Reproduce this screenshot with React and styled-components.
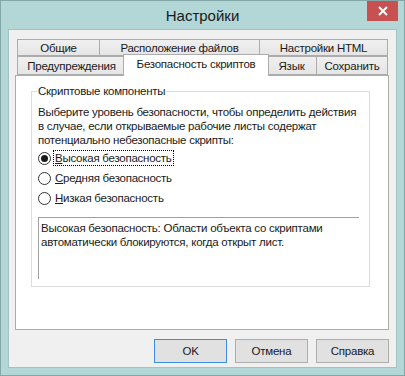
import React, { useState } from 'react';
import styled, { createGlobalStyle } from 'styled-components';

const GlobalStyle = createGlobalStyle`
  html, body {
    margin: 0;
    padding: 0;
    background: #b3d6d7;
  }
  * {
    box-sizing: border-box;
  }
`;

const topTabs = ['Общие', 'Расположение файлов', 'Настройки HTML'];
const bottomTabs = ['Предупреждения', 'Безопасность скриптов', 'Язык', 'Сохранить'];
const topWidths = [82, 160, 129];
const bottomWidths = [108, 142, 49, 72];

const levels = [
  { key: 'В', rest: 'ысокая безопасность' },
  { key: 'С', rest: 'редняя безопасность' },
  { key: 'Н', rest: 'изкая безопасность' },
];

const App = () => {
  const [level, setLevel] = useState(0);

  return (
    <>
      <GlobalStyle />
      <Window>
        <TitleBar>
          <Title>Настройки</Title>
          <CloseButton>
            <svg width="10" height="10" viewBox="0 0 10 10">
              <path d="M1 1 L9 9 M9 1 L1 9" stroke="#fff" strokeWidth="2" />
            </svg>
          </CloseButton>
        </TitleBar>
        <Client>
          <TabRow>
            {topTabs.map((t, i) => (
              <Tab key={t} style={{ width: topWidths[i] }}>{t}</Tab>
            ))}
          </TabRow>
          <TabRow>
            {bottomTabs.map((t, i) => (
              i === 1
                ? <ActiveTab key={t} style={{ width: bottomWidths[i] + 4 }}>{t}</ActiveTab>
                : <Tab key={t} style={{ width: bottomWidths[i] }}>{t}</Tab>
            ))}
          </TabRow>
          <Panel>
            <Group>
              <Legend>Скриптовые компоненты</Legend>
              <Description>
                Выберите уровень безопасности, чтобы определить действия<br />
                в случае, если открываемые рабочие листы содержат<br />
                потенциально небезопасные скрипты:
              </Description>
              <RadioList>
                {levels.map((l, i) => (
                  <RadioRow key={l.key} onClick={() => setLevel(i)}>
                    <RadioCircle $checked={level === i} />
                    <RadioLabel $focused={level === i}>
                      <u>{l.key}</u>{l.rest}
                    </RadioLabel>
                  </RadioRow>
                ))}
              </RadioList>
              <InfoBox>
                Высокая безопасность: Области объекта со скриптами<br />
                автоматически блокируются, когда открыт лист.
              </InfoBox>
            </Group>
          </Panel>
          <ButtonRow>
            <Button $default>OK</Button>
            <Button>Отмена</Button>
            <Button>Справка</Button>
          </ButtonRow>
        </Client>
      </Window>
    </>
  );
};

const Window = styled.div`
  width: 405px;
  height: 376px;
  border: 1px solid #83a6a7;
  background: #b3d6d7;
  padding: 0 7px 7px 7px;
  display: flex;
  flex-direction: column;
  font-family: "Liberation Sans", Arial, sans-serif;
  font-size: 11.5px;
  letter-spacing: -0.25px;
  color: #1a1a1a;
`;

const TitleBar = styled.div`
  height: 29px;
  display: flex;
  align-items: center;
  justify-content: center;
  position: relative;
`;

const Title = styled.div`
  font-size: 15px;
  letter-spacing: 0;
  color: #1a1a1a;
  padding-top: 1px;
`;

const CloseButton = styled.div`
  position: absolute;
  top: 0;
  right: -1px;
  width: 31px;
  height: 20px;
  background: #c75050;
  display: flex;
  align-items: center;
  justify-content: center;
`;

const Client = styled.div`
  flex: 1;
  background: #f0f0f0;
  border: 1px solid #a0c3c4;
  padding: 9px 7px 4px 6px;
  display: flex;
  flex-direction: column;
`;

const TabRow = styled.div`
  display: flex;
  padding-left: 2px;
  height: 17px;
  align-items: flex-end;

  & + & {
    height: 19px;
  }
`;

const Tab = styled.div`
  height: 100%;
  border: 1px solid #acacac;
  border-right: none;
  background: linear-gradient(#f0f0f0, #e5e5e5);
  display: flex;
  align-items: center;
  justify-content: center;
  white-space: nowrap;
  padding-top: 1px;

  &:last-child {
    border-right: 1px solid #acacac;
  }
`;

const ActiveTab = styled.div`
  height: 22px;
  margin: 0 -2px -1px -2px;
  border: 1px solid #acacac;
  border-bottom: none;
  background: #fff;
  display: flex;
  align-items: center;
  justify-content: center;
  white-space: nowrap;
  padding-bottom: 3px;
  position: relative;
  z-index: 1;

  & + ${Tab} {
    border-left: none;
  }
`;

const Panel = styled.div`
  height: 255px;
  background: #fff;
  border: 1px solid #acacac;
  padding: 8px 18px 0 15px;
`;

const Group = styled.fieldset`
  margin: 0;
  height: 203px;
  border: 1px solid #dcdcdc;
  padding: 0 6px 0 6px;
`;

const Legend = styled.legend`
  padding: 0 1px;
  margin-left: -1px;
  line-height: 14px;
`;

const Description = styled.div`
  margin-top: 7px;
  line-height: 14px;
  white-space: nowrap;
`;

const RadioList = styled.div`
  margin-top: 4px;
  display: flex;
  flex-direction: column;
  gap: 6px;
`;

const RadioRow = styled.div`
  display: flex;
  align-items: center;
  height: 14px;
  cursor: default;
`;

const RadioCircle = styled.span`
  width: 13px;
  height: 13px;
  border-radius: 50%;
  border: 1px solid #333;
  background: #fff;
  display: flex;
  align-items: center;
  justify-content: center;
  margin-right: 3px;

  &::after {
    content: '';
    width: 7px;
    height: 7px;
    border-radius: 50%;
    background: ${p => (p.$checked ? '#1a1a1a' : 'transparent')};
  }
`;

const RadioLabel = styled.span`
  outline: ${p => (p.$focused ? '1px dotted #000' : 'none')};
  outline-offset: 0;
  padding: 0 1px;
  line-height: 14px;
`;

const InfoBox = styled.div`
  margin-top: 12px;
  height: 62px;
  width: 321px;
  border-top: 1px solid #a0a0a0;
  border-left: 1px solid #a0a0a0;
  padding: 3px 2px;
  line-height: 14px;
  white-space: nowrap;
`;

const ButtonRow = styled.div`
  display: flex;
  justify-content: flex-end;
  gap: 8px;
  margin-top: 9px;
  padding-right: 0;
`;

const Button = styled.button`
  width: 73px;
  height: 24px;
  font-family: inherit;
  font-size: 11.5px;
  letter-spacing: -0.25px;
  color: #1a1a1a;
  background: #e1e1e1;
  border: 1px solid ${p => (p.$default ? '#3c8fe0' : '#adadad')};
  padding: 0;
`;

export default App;
